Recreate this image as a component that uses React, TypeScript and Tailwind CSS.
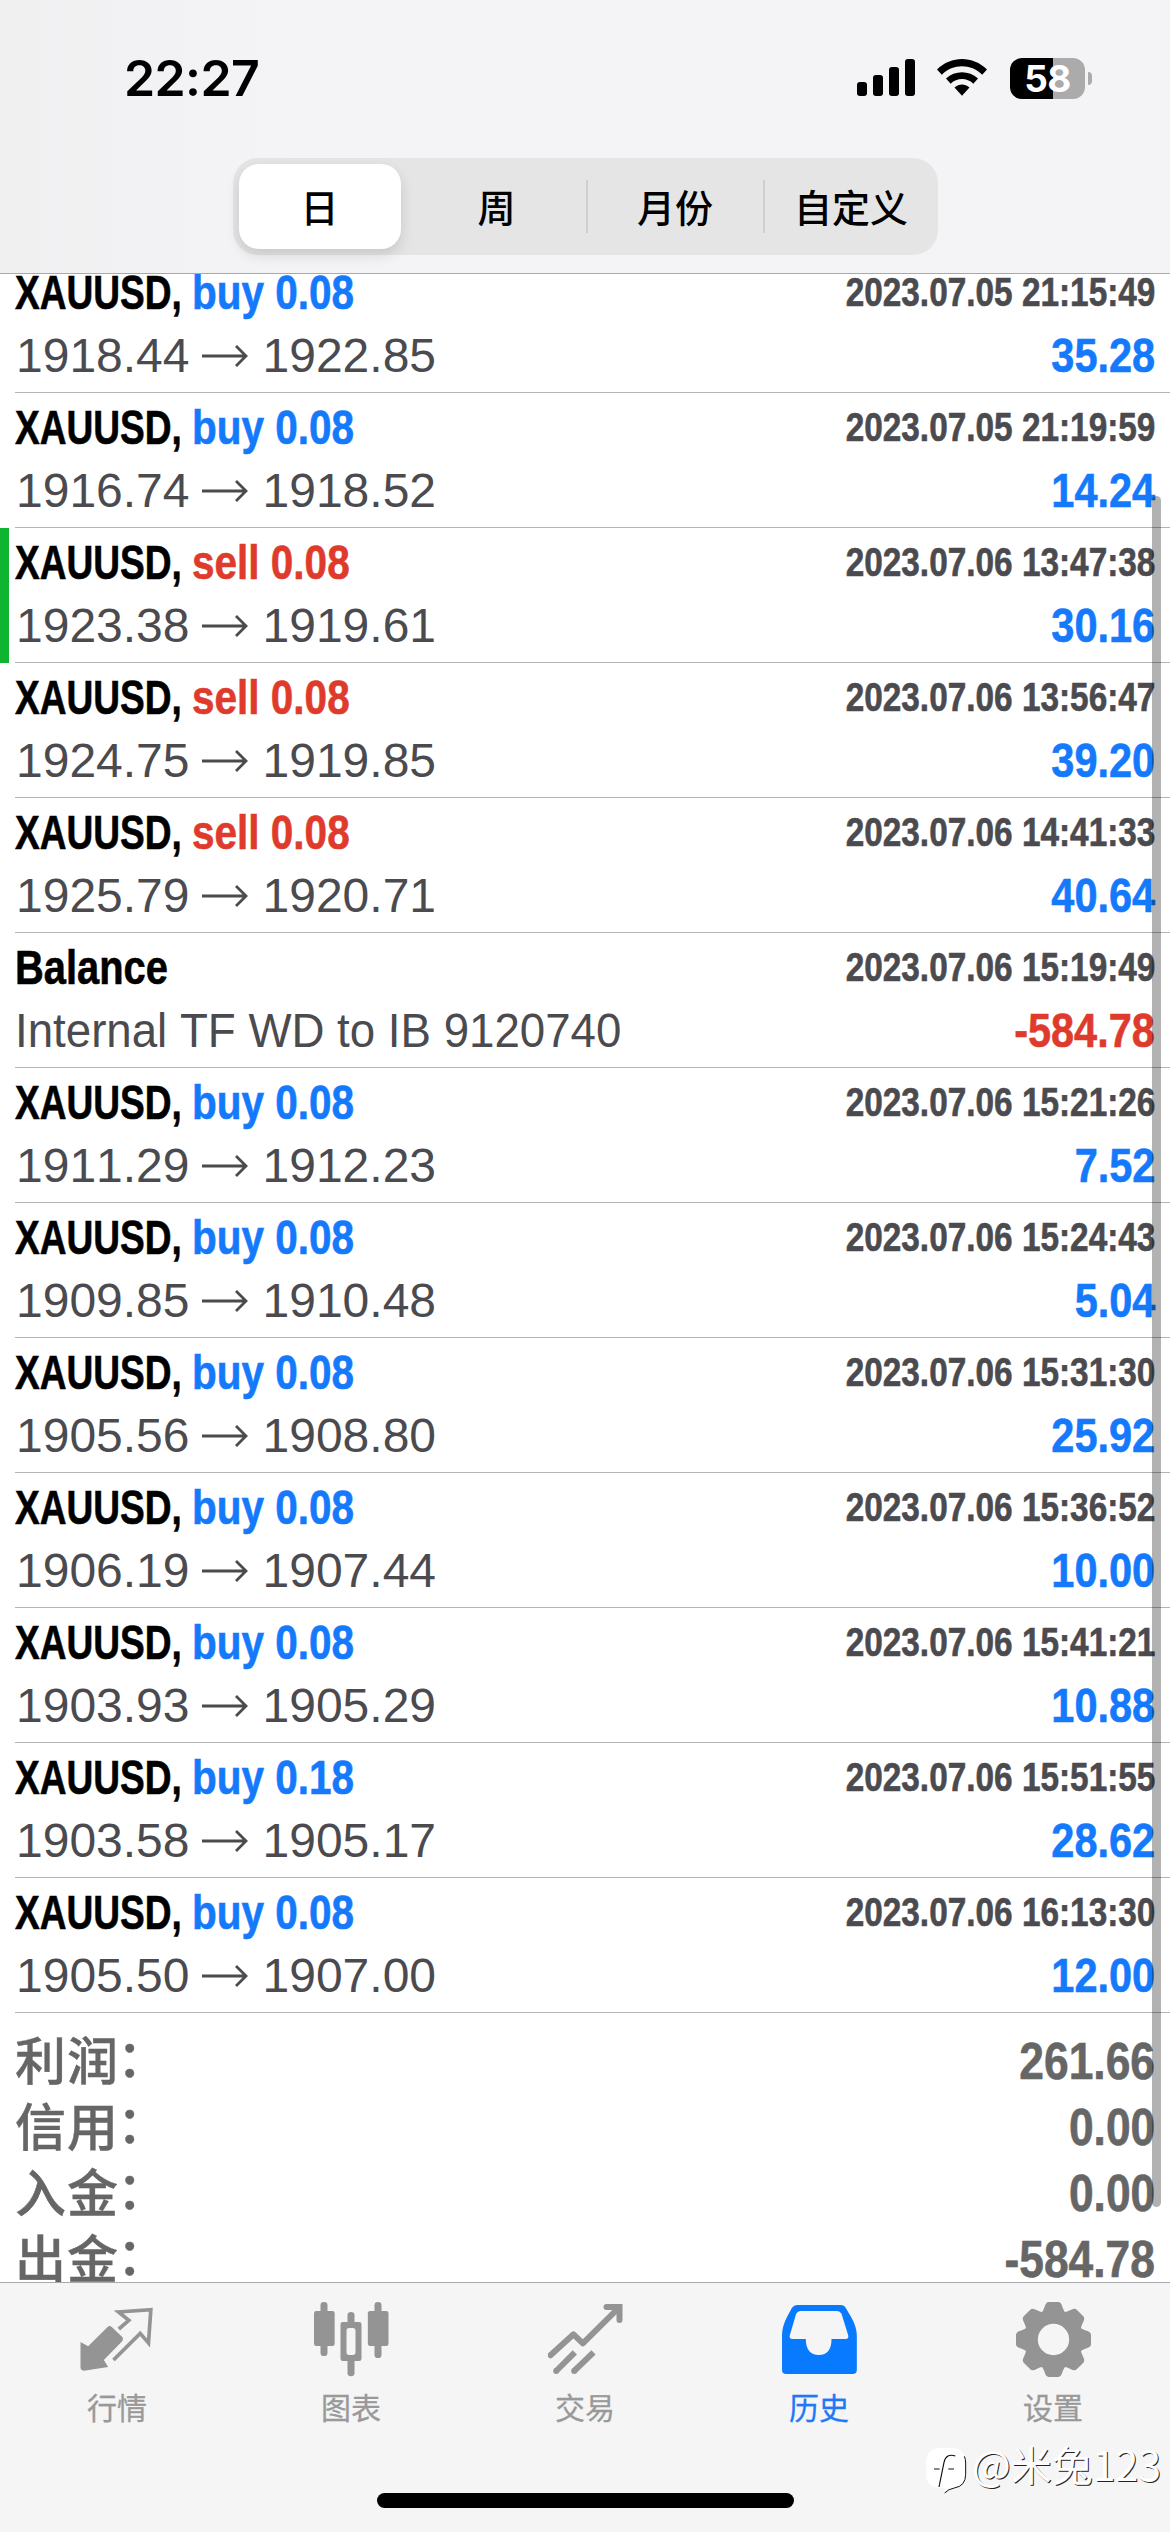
import type { ReactNode } from 'react';

type Row = {
  kind: 'buy' | 'sell' | 'balance';
  lot?: string;
  from?: string;
  to?: string;
  note?: string;
  time: string;
  value: string;
  marked?: boolean;
};

const rows: Row[] = [
  { kind: 'buy', lot: '0.08', from: '1918.44', to: '1922.85', time: '2023.07.05 21:15:49', value: '35.28' },
  { kind: 'buy', lot: '0.08', from: '1916.74', to: '1918.52', time: '2023.07.05 21:19:59', value: '14.24' },
  { kind: 'sell', lot: '0.08', from: '1923.38', to: '1919.61', time: '2023.07.06 13:47:38', value: '30.16', marked: true },
  { kind: 'sell', lot: '0.08', from: '1924.75', to: '1919.85', time: '2023.07.06 13:56:47', value: '39.20' },
  { kind: 'sell', lot: '0.08', from: '1925.79', to: '1920.71', time: '2023.07.06 14:41:33', value: '40.64' },
  { kind: 'balance', note: 'Internal TF WD to IB 9120740', time: '2023.07.06 15:19:49', value: '-584.78' },
  { kind: 'buy', lot: '0.08', from: '1911.29', to: '1912.23', time: '2023.07.06 15:21:26', value: '7.52' },
  { kind: 'buy', lot: '0.08', from: '1909.85', to: '1910.48', time: '2023.07.06 15:24:43', value: '5.04' },
  { kind: 'buy', lot: '0.08', from: '1905.56', to: '1908.80', time: '2023.07.06 15:31:30', value: '25.92' },
  { kind: 'buy', lot: '0.08', from: '1906.19', to: '1907.44', time: '2023.07.06 15:36:52', value: '10.00' },
  { kind: 'buy', lot: '0.08', from: '1903.93', to: '1905.29', time: '2023.07.06 15:41:21', value: '10.88' },
  { kind: 'buy', lot: '0.18', from: '1903.58', to: '1905.17', time: '2023.07.06 15:51:55', value: '28.62' },
  { kind: 'buy', lot: '0.08', from: '1905.50', to: '1907.00', time: '2023.07.06 16:13:30', value: '12.00' },
];

const totals = [
  { label: '利润', value: '261.66' },
  { label: '信用', value: '0.00' },
  { label: '入金', value: '0.00' },
  { label: '出金', value: '-584.78' },
];

function StatusBar() {
  return (
    <div className="flex h-[158px] items-start justify-between pt-[48px] pl-[124px] pr-[78px]">
      <span className="font-['Inter'] text-[50px] font-semibold leading-[60px] tracking-[-0.6px] text-black">22:27</span>
      <div className="flex items-center pt-[9px]">
        <svg className="h-[42px] w-[58px]" viewBox="0 0 58 42">
          <rect x="0" y="25" width="10" height="14" rx="3" />
          <rect x="16" y="18" width="10" height="21" rx="3" />
          <rect x="32" y="10" width="10" height="29" rx="3" />
          <rect x="48" y="2" width="10" height="37" rx="3" />
        </svg>
        <svg className="ml-[22px] h-[42px] w-[50px]" viewBox="0 0 50 42">
          <path d="M0 12.5C14-1.5 36-1.5 50 12.5L45.200 17.700C34 6.500 16 6.500 4.800 17.700Z" />
          <path d="M9 21.500C18 13 32 13 41 21.500L36.300 26.700C30 20.500 20 20.500 13.700 26.700Z" />
          <path d="M17.500 30.500C22 26.500 28 26.500 32.500 30.500L25 38.700Z" />
        </svg>
        <div className="ml-[23px] flex h-[41px] w-[75px] items-center justify-center rounded-[12px] bg-linear-to-r from-black from-57% to-[#ababab] to-57%">
          <span className="font-['Inter'] text-[37px] font-bold leading-[41px] tracking-[-0.5px] text-white">58</span>
        </div>
        <div className="ml-[3px] h-[13px] w-[4px] rounded-r-full bg-[#ababab]" />
      </div>
    </div>
  );
}

function Segments() {
  return (
    <div className="mx-auto flex h-[97px] w-[705px] items-center rounded-[25px] bg-[#e5e5e6] font-['Noto_Sans_CJK_SC',sans-serif] text-[38px] leading-[56px] font-medium text-black">
      <div className="ml-[6px] flex h-[85px] w-[162px] items-center justify-center rounded-[20px] bg-white pb-[2px] shadow-[0_6px_14px_rgba(0,0,0,0.13)]">日</div>
      <div className="w-[185px] pb-[2px] pl-[7px] text-center">周</div>
      <div className="h-[53px] w-[2px] bg-[#cfcfd1]" />
      <div className="w-[175px] pb-[2px] text-center">月份</div>
      <div className="h-[53px] w-[2px] bg-[#cfcfd1]" />
      <div className="w-[173px] pb-[2px] text-center">自定义</div>
    </div>
  );
}

function Arrow() {
  return (
    <svg className="ml-[12px] mr-[15px] h-[24px] w-[46px]" viewBox="0 0 46 24" fill="none" stroke="#4b4b4f" strokeWidth="2.800">
      <path d="M0 12H44M34 2L44 12L34 22" />
    </svg>
  );
}

function HistoryRow({ row }: { row: Row }) {
  const actionColor = row.kind === 'buy' ? 'text-[#1479fb]' : 'text-[#df3b2c]';
  const valueColor = row.value.startsWith('-') ? 'text-[#df3b2c]' : 'text-[#1479fb]';
  return (
    <div className={row.marked ? 'flex h-[135px] shrink-0 border-l-[9px] border-[#0fb530] pl-[6px]' : 'flex h-[135px] shrink-0 pl-[15px]'}>
      <div className="h-[135px] grow border-b border-[#b4b4b6] pr-[15px] pt-[3px] text-[48px]">
        <div className="flex h-[63px] justify-between whitespace-nowrap leading-[63px] font-bold [-webkit-text-stroke:0.6px]">
          <div className="flex">
            {row.kind === 'balance' ? (
              <span className="w-[160px] origin-left scale-x-[0.83] text-black">Balance</span>
            ) : (
              <>
                <span className="w-[177px] origin-left scale-x-[0.772] text-black">XAUUSD,</span>
                <span className={`origin-left scale-x-[0.844] ${actionColor}`}>
                  {row.kind} {row.lot}
                </span>
              </>
            )}
          </div>
          <span className="origin-right scale-x-[0.834] text-[40px] leading-[62px] text-[#4b4b4f] [font-kerning:none]">{row.time}</span>
        </div>
        <div className="flex h-[63px] justify-between whitespace-nowrap leading-[63px] [font-kerning:none]">
          {row.note ? (
            <span className="origin-left scale-x-[0.951] text-[#4b4b4f]">{row.note}</span>
          ) : (
            <div className="flex items-center pl-px text-[#4b4b4f]">
              <span>{row.from}</span>
              <Arrow />
              <span>{row.to}</span>
            </div>
          )}
          <span className={`origin-right scale-x-[0.864] font-bold [-webkit-text-stroke:0.6px] ${valueColor}`}>{row.value}</span>
        </div>
      </div>
    </div>
  );
}

function Summary() {
  return (
    <div className="shrink-0 pl-[15px] pr-[15px] pt-[15px] text-[51px] text-[#666]">
      {totals.map((t) => (
        <div key={t.label} className="flex h-[66px] justify-between leading-[66px]">
          <div className="relative -top-[3px] flex font-['Noto_Sans_CJK_SC',sans-serif] font-medium [-webkit-text-stroke:0.4px]">
            <span className="tracking-[1px]">{t.label}</span>
            <span className="relative -top-[3px] -left-[2px]">：</span>
          </div>
          <span className="origin-right scale-x-[0.87] pt-px font-bold [-webkit-text-stroke:0.6px] [font-kerning:none]">{t.value}</span>
        </div>
      ))}
    </div>
  );
}

function QuotesIcon() {
  return (
    <svg className="size-[75px]" viewBox="118.500 66 225 225">
      <path d="M120 186L143 199L202 140Q208 135 214 141L246 172Q250 178 245 184L190 240L203 261L130 272Q120 272 120 262Z" fill="#949494" />
      <path d="M235 147L265 121L234 96L331 89L324 189L299 160L219 240" fill="none" stroke="#949494" strokeWidth="11" />
    </svg>
  );
}

function ChartIcon() {
  return (
    <svg className="size-[75px]" viewBox="820.500 66 225 225" fill="#949494">
      <rect x="820.500" y="93" width="62" height="105" rx="7" />
      <rect x="840" y="66" width="21" height="162" rx="10" />
      <rect x="982" y="93" width="62" height="105" rx="7" />
      <rect x="1002" y="66" width="21" height="168" rx="10" />
      <path d="M921 130V106Q921 96 931.500 96Q942 96 942 106V130Z" />
      <path d="M921 240V279Q921 289 931.500 289Q942 289 942 279V240Z" />
      <path fillRule="evenodd" d="M907 126H956Q963 126 963 133V236Q963 243 956 243H907Q900 243 900 236V133Q900 126 907 126ZM926 144Q918 144 918 152V217Q918 225 926 225H937Q945 225 945 217V152Q945 144 937 144Z" />
    </svg>
  );
}

function TradeIcon() {
  return (
    <svg className="size-[75px]" viewBox="142.500 66 225 225" fill="none" stroke="#949494" strokeWidth="18">
      <path d="M150 226L219 163L247 190L350 88" strokeLinecap="round" strokeLinejoin="round" />
      <path d="M318 81H357V120" strokeLinecap="round" />
      <path d="M167 273L223 217M221 273L279 217" />
      <circle cx="167" cy="273" r="9" fill="#949494" stroke="none" />
      <circle cx="221" cy="273" r="9" fill="#949494" stroke="none" />
    </svg>
  );
}

function HistoryIcon() {
  return (
    <svg className="size-[75px]" viewBox="844.500 66 225 225" fill="#087aff">
      <path fillRule="evenodd" d="M890 75H1021Q1031 75 1036 84C1052 112 1069 135 1069 168V269Q1069 282 1056 282H857Q844.500 282 844.500 269V168C844.500 135 859 112 874 84Q880 75 890 75ZM900 93Q891 93 887 101L868 166Q865 177 876 177H916C916 209 930 225 955 225C980 225 993 209 993 177H1035Q1046 177 1043 166L1023 101Q1019 93 1010 93Z" />
    </svg>
  );
}

const toothAngles = [0, 45, 90, 135, 180, 225, 270, 315];

function SettingsIcon() {
  return (
    <svg className="size-[75px]" viewBox="-112.500 -112.500 225 225" fill="#949494">
      <path fillRule="evenodd" d="M0 -87A87 87 0 1 1 0 87A87 87 0 1 1 0 -87ZM0 -47A47 47 0 1 0 0 47A47 47 0 1 0 0 -47Z" />
      {toothAngles.map((a) => (
        <path key={a} transform={`rotate(${a})`} d="M-39 -77Q-31 -84 -27 -97Q-23 -112.500 -14 -112.500H14Q23 -112.500 27 -97Q31 -84 39 -77L20 -60H-20Z" />
      ))}
    </svg>
  );
}

function Tab({ label, active, children }: { label: string; active?: boolean; children: ReactNode }) {
  return (
    <div className={`flex w-[234px] flex-col items-center pt-[19px] ${active ? 'text-[#1f78f5]' : 'text-[#999]'}`}>
      {children}
      <span className="mt-[7px] font-['Noto_Sans_CJK_SC',sans-serif] text-[30px] leading-[44px] [-webkit-text-stroke:0.3px]">{label}</span>
    </div>
  );
}

function Watermark() {
  return (
    <div className="absolute top-[160px] right-[9px] flex items-start text-white">
      <svg className="mt-[4px] h-[48px] w-[42px]" viewBox="0 0 126 144">
        <path d="M45 3H82Q122 6 122 48V82Q122 117 88 123Q70 126 60 139L58 125L40 122Q4 118 4 84V46Q4 6 45 3Z" fill="#fff" />
        <path d="M118 28Q122 36 122 48V82Q122 117 88 123Q70 126 59 138" fill="none" stroke="#111" strokeWidth="3" />
        <path d="M91 27Q64 18 57 46L42 120M27 66H44M70 66H87" fill="none" stroke="#111" strokeWidth="3.500" />
      </svg>
      <span className="ml-[5px] font-['Noto_Sans_CJK_SC',sans-serif] text-[41px] leading-[40px] [text-shadow:1px_1px_0_#222]">@米兔123</span>
    </div>
  );
}

export default function App() {
  return (
    <div className="relative flex h-[2532px] w-[1170px] flex-col overflow-hidden bg-white font-['Liberation_Sans',sans-serif]">
      <header className="h-[274px] shrink-0 border-b border-[#a9a9ab] bg-linear-to-r from-[#f0f0f1] via-[#f4f4f7] via-25% to-[#f4f4f6]">
        <StatusBar />
        <Segments />
      </header>
      <main className="flex h-[2008px] shrink-0 flex-col overflow-hidden">
        <div className="-mt-[16px] flex flex-col">
          {rows.map((row) => (
            <HistoryRow key={row.time} row={row} />
          ))}
          <Summary />
        </div>
      </main>
      <footer className="relative h-[250px] shrink-0 border-t border-[#a9a9ab] bg-[#f5f5f6]">
        <div className="flex">
          <Tab label="行情"><QuotesIcon /></Tab>
          <Tab label="图表"><ChartIcon /></Tab>
          <Tab label="交易"><TradeIcon /></Tab>
          <Tab label="历史" active><HistoryIcon /></Tab>
          <Tab label="设置"><SettingsIcon /></Tab>
        </div>
        <Watermark />
        <div className="mx-auto mt-[65px] h-[15px] w-[417px] rounded-full bg-black" />
      </footer>
      <div className="absolute top-[496px] left-[1152px] h-[1711px] w-[9px] rounded-full bg-black/30" />
    </div>
  );
}
